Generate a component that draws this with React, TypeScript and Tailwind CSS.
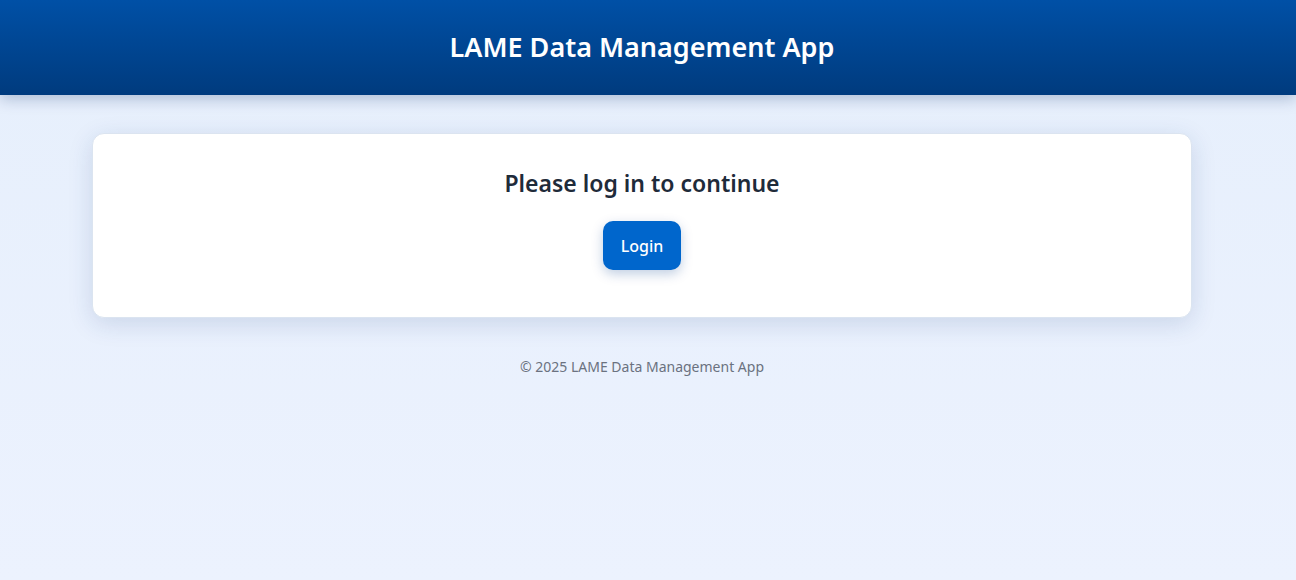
export default function App() {
  return (
    <div
      className="min-h-[580px] w-full bg-gradient-to-b from-[#e6effc] to-[#ecf2fe]"
      style={{ fontFamily: '"Noto Sans", "Open Sans", sans-serif' }}
    >
      <header className="h-[95px] pr-[12px] flex items-center justify-center bg-gradient-to-b from-[#0050a6] to-[#003b7e] shadow-[0_4px_14px_rgba(0,40,100,0.25)]">
        <h1 className="text-[27px] font-semibold text-white">LAME Data Management App</h1>
      </header>

      <div className="w-[1284px]">
        <main className="px-[92px] pt-[38px]">
          <div className="bg-white rounded-[12px] border border-[#dbe4f0] shadow-[0_6px_24px_rgba(30,60,120,0.15)] pt-[33px] pb-[47px] flex flex-col items-center">
            <h2 className="text-[23px] font-semibold text-[#1f2b3a] leading-[32px]">Please log in to continue</h2>
            <button className="mt-[22px] h-[49px] w-[78px] rounded-[10px] bg-[#0066cc] text-white text-[16px] font-medium shadow-[0_4px_12px_rgba(0,60,140,0.25)]">
              Login
            </button>
          </div>
        </main>

        <footer className="pt-[38px] text-center text-[14px] text-[#6b7280]">
          © 2025 LAME Data Management App
        </footer>
      </div>
    </div>
  );
}
